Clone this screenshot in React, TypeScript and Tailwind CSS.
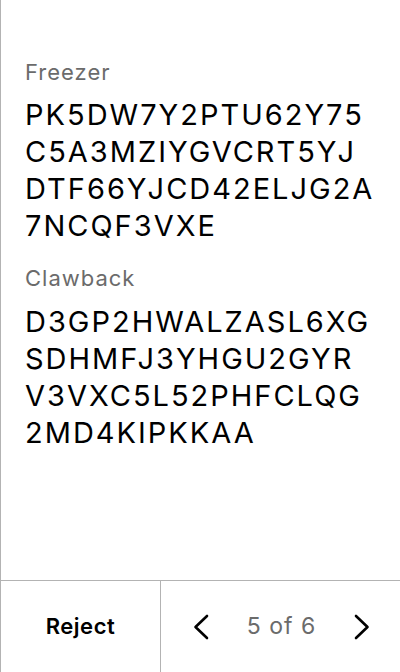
import React from "react";

function Chevron({ dir }: { dir: "left" | "right" }) {
  return (
    <svg width="16" height="26" viewBox="0 0 16 26" fill="none" stroke="#000" strokeWidth="2.6" strokeLinecap="round" strokeLinejoin="round">
      {dir === "left" ? <path d="M14 2 L2.5 13 L14 24" /> : <path d="M2 2 L13.5 13 L2 24" />}
    </svg>
  );
}

export default function App() {
  return (
    <div className="w-[400px] h-[672px] bg-white border-l border-[#b3b3b3] flex flex-col" style={{ fontFamily: "Inter, 'Noto Sans', sans-serif" }}>
      <div className="flex-1 pl-6 pr-2 pt-[56px]">
        <div className="text-[22px] leading-[32px] tracking-[1px] text-[#6b6b6b]">Freezer</div>
        <div className="text-[29px] leading-[37px] tracking-[2px] text-black mt-[8px]">
          <div>PK5DW7Y2PTU62Y75</div>
          <div>C5A3MZIYGVCRT5YJ</div>
          <div>DTF66YJCD42ELJG2A</div>
          <div>7NCQF3VXE</div>
        </div>
        <div className="text-[22px] leading-[32px] tracking-[1px] text-[#6b6b6b] mt-[18px]">Clawback</div>
        <div className="text-[29px] leading-[37px] tracking-[2px] text-black mt-[9px]">
          <div>D3GP2HWALZASL6XG</div>
          <div>SDHMFJ3YHGU2GYR</div>
          <div>V3VXC5L52PHFCLQG</div>
          <div>2MD4KIPKKAA</div>
        </div>
      </div>
      <div className="h-[92px] border-t border-[#b3b3b3] flex">
        <div className="w-[160px] flex items-center justify-center border-r border-[#b3b3b3]">
          <span className="text-[22px] font-semibold tracking-[0.5px] text-black">Reject</span>
        </div>
        <div className="flex-1 flex items-center justify-between pl-[32px] pr-[30px]">
          <Chevron dir="left" />
          <span className="text-[23px] tracking-[1px] text-[#6b6b6b]">5 of 6</span>
          <Chevron dir="right" />
        </div>
      </div>
    </div>
  );
}
